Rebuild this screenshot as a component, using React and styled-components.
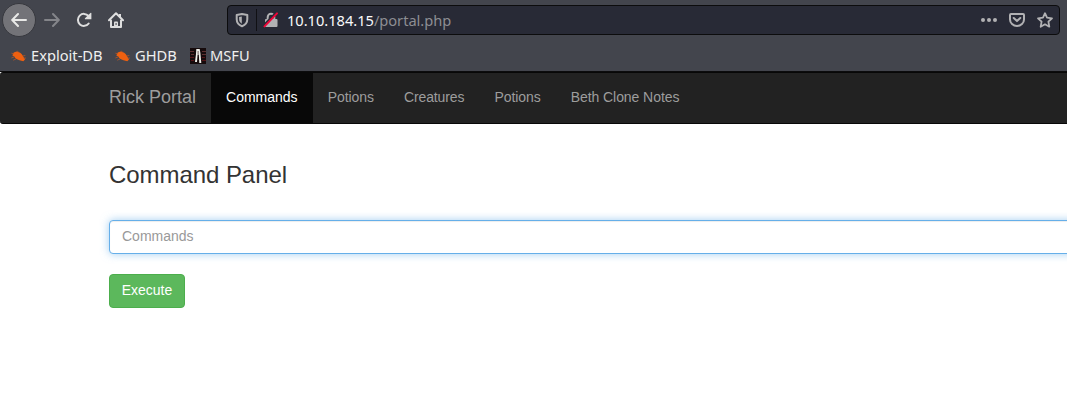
import React from "react";
import styled, { createGlobalStyle } from "styled-components";

const GlobalStyle = createGlobalStyle`
  *, *::before, *::after { box-sizing: border-box; }
  html, body { margin: 0; background: #fff; overflow: hidden; }
  button, input { font: inherit; }
`;

const Page = styled.div`
  width: 100%;
  height: 416px;
  overflow: hidden;
  background: #fff;
  color: #333;
  font: 14px/20px "Liberation Sans", Arial, sans-serif;
`;

const BrowserChrome = styled.header`
  height: 72px;
  background: #43454d;
  border-bottom: 1px solid #0c0c0d;
  font-family: "Noto Sans", sans-serif;
`;

const Toolbar = styled.div`
  display: flex;
  align-items: center;
  height: 40px;
  padding: 0 7px 0 2px;
`;

const NavButton = styled.span`
  display: flex;
  align-items: center;
  justify-content: center;
  width: 32px;
  height: 32px;
  color: ${(p) => (p.$dim ? "#84858a" : "#dedede")};
`;

const BackButton = styled.span`
  display: flex;
  align-items: center;
  justify-content: center;
  width: 34px;
  height: 34px;
  border: 1px solid #37383e;
  border-radius: 50%;
  background: #737378;
  color: #e9e9e7;
`;

const UrlBar = styled.div`
  display: flex;
  align-items: center;
  flex: 1;
  height: 30px;
  margin-left: 95px;
  padding: 0 6px;
  border: 1px solid #0c0c0d;
  border-radius: 4px;
  background: #282a36;
  color: #b1b1b3;
`;

const UrlDivider = styled.span`
  width: 1px;
  height: 22px;
  margin: 0 6px 0 6px;
  background: #101014;
`;

const Url = styled.span`
  flex: 1;
  margin-left: 8px;
  font-size: 14.67px;
  line-height: 20px;
  letter-spacing: -0.03px;
  color: #8d8e93;
`;

const Host = styled.span`
  color: #f9f9fa;
`;

const UrlActions = styled.span`
  display: flex;
  align-items: center;
  gap: 12px;
`;

const Bookmarks = styled.div`
  display: flex;
  align-items: center;
  height: 31px;
  padding-left: 11px;
`;

const Bookmark = styled.span`
  display: flex;
  align-items: center;
  gap: 4px;
  width: ${(p) => p.$width}px;
  font-size: 14.67px;
  line-height: 20px;
  color: #f0f0f0;
  white-space: nowrap;
`;

const BookmarkLabel = styled.span`
  padding-bottom: 2px;
`;

const Icon = styled.svg`
  display: block;
  flex: none;
`;

const Navbar = styled.nav`
  display: flex;
  height: 52px;
  padding-left: 94px;
  border: solid #080808;
  border-width: 1px 0;
  border-radius: 3px 0 0 3px;
  background: #222;
`;

const Brand = styled.span`
  padding: 14px 15px;
  font-size: 18px;
  line-height: 20px;
  color: #9d9d9d;
`;

const NavItem = styled.span`
  padding: 14px 15px 16px;
  letter-spacing: ${(p) => p.$tracking}px;
  white-space: nowrap;
  color: ${(p) => (p.$active ? "#fff" : "#9d9d9d")};
  background: ${(p) => (p.$active ? "#080808" : "transparent")};
`;

const Panel = styled.main`
  padding: 37px 0 0 109px;
`;

const Title = styled.h3`
  margin: 0 0 32px;
  font-size: 24px;
  font-weight: 400;
  line-height: 27px;
  letter-spacing: -0.06px;
`;

const CommandInput = styled.input`
  display: block;
  width: 1140px;
  height: 34px;
  padding: 5px 12px 7px;
  border: 1px solid #66afe9;
  border-radius: 4px;
  outline: 0;
  background: #fff;
  color: #555;
  box-shadow: inset 0 1px 1px rgba(0, 0, 0, 0.075), 0 0 8px rgba(102, 175, 233, 0.6);

  &::placeholder {
    color: #999;
    opacity: 1;
  }
`;

const ExecuteButton = styled.button`
  display: block;
  width: 76px;
  height: 34px;
  margin-top: 20px;
  padding: 5px 0 7px;
  border: 1px solid #4cae4c;
  border-radius: 4px;
  background: #5cb85c;
  color: #fff;
  line-height: 20px;
`;

const stroke = {
  fill: "none",
  stroke: "currentColor",
  strokeWidth: 2,
  strokeLinecap: "round",
  strokeLinejoin: "round",
};

const BackIcon = () => (
  <Icon width="16" height="16" viewBox="0 0 16 16">
    <path {...stroke} d="M15 8H1.5M7 2 1.2 8 7 14" />
  </Icon>
);

const ForwardIcon = () => (
  <Icon width="16" height="16" viewBox="0 0 16 16">
    <path {...stroke} d="M1 8h13.5M9 2l5.8 6L9 14" />
  </Icon>
);

const ReloadIcon = () => (
  <Icon width="16" height="16" viewBox="0 0 16 16">
    <path {...stroke} d="M12.7 11.5A6 6 0 1 1 12.5 4" />
    <path fill="currentColor" d="M15.4 1v6.2H9Q8.6 6.6 9 6.2L14.4 1Q15 .6 15.4 1Z" />
  </Icon>
);

const HomeIcon = () => (
  <Icon width="16" height="16" viewBox="0 0 16 16">
    <path {...stroke} d="M1 8.2 8 1.2l7 7M3 8.5V15h10V8.5" />
    <path fill="currentColor" d="M6 15v-4.6q0-.9.9-.9h2.2q.9 0 .9.9V15Z" />
    <path fill="#43454d" d="M7.4 11.2h1.4v1.6H7.4Z" />
    <path fill="currentColor" d="M11 2h2v4l-2-2Z" />
  </Icon>
);

const ShieldIcon = () => (
  <Icon width="16" height="16" viewBox="0 0 16 16">
    <path {...stroke} d="M8 2 13.3 3v4.2c0 3.4-2 5.7-5.3 7-3.3-1.3-5.3-3.6-5.3-7V3Z" />
    <path fill="currentColor" d="M7.8 4.5v7.2C6 10.6 5.1 9.1 5.1 7V5Z" />
  </Icon>
);

const InsecureIcon = () => (
  <Icon width="16" height="16" viewBox="0 0 16 16">
    <path {...stroke} d="M4.7 8V5a3.3 3.3 0 0 1 6.6 0v3" />
    <rect x="2" y="7" width="12.5" height="8" rx="1" fill="currentColor" />
    <path d="M.3 13.7 12.9.7" stroke="#282a36" strokeWidth="2" />
    <path d="M1.5 14.4 14 1.4" stroke="#f00438" strokeWidth="2" strokeLinecap="round" />
  </Icon>
);

const MoreIcon = () => (
  <Icon width="16" height="16" viewBox="0 0 16 16" fill="currentColor">
    <circle cx="2" cy="8" r="2" />
    <circle cx="8" cy="8" r="2" />
    <circle cx="14" cy="8" r="2" />
  </Icon>
);

const PocketIcon = () => (
  <Icon width="16" height="16" viewBox="0 0 16 16">
    <path {...stroke} d="M2 2h12q1 0 1 1v4.5a7 6.5 0 0 1-14 0V3q0-1 1-1Z" />
    <path {...stroke} d="M4.7 6 8 9.1 11.3 6" />
  </Icon>
);

const StarIcon = () => (
  <Icon width="16" height="16" viewBox="0 0 16 16">
    <path {...stroke} strokeWidth="1.8" d="m8 1.2 2 4.5 5 .6-3.6 3.4.9 5L8 12.3l-4.3 2.4.9-5L1 6.3l5-.6Z" />
  </Icon>
);

const BugIcon = () => (
  <Icon width="16" height="16" viewBox="0 0 16 16">
    <path
      fill="#ef6010"
      d="M2.8 4.6 5.5 3.6Q9.7 4 11.8 7.7L14 11.4 12.3 13.2 8.5 12.2Q4.3 11.3 3.3 8.6L1.3 7.6Z"
    />
    <path
      fill="none"
      stroke="#c8581c"
      strokeWidth="0.7"
      d="M3 6 .4 5.2M3 9 .4 10M5 11 2.2 12.2M7.5 4.8 6.5 2.8M11.5 8l2.8-.5M12.4 10.2l2.6-.2"
    />
  </Icon>
);

const MsfuIcon = () => (
  <Icon width="16" height="16" viewBox="0 0 16 16">
    <rect width="16" height="16" fill="#160b0c" />
    <path stroke="#5c3030" strokeWidth="1" d="M0 3.5h4M1 6.5h3M12 3.5h4M12 6.5h4" />
    <path stroke="#551417" strokeWidth="1" d="M0 9.5h4M1 12.5h3M12 9.5h3M12 12.5h4" />
    <path fill="#efefe9" d="M6.3 1h3.4l.7 4 .9 10H9.3L8.8 6.5H7.6L7 14H5l1-8Z" />
    <path fill="#6b5a58" d="M7.6 3h1v3h-1Z" />
  </Icon>
);

const bookmarks = [
  { label: "Exploit-DB", width: 104, icon: <BugIcon /> },
  { label: "GHDB", width: 75, icon: <BugIcon /> },
  { label: "MSFU", width: 61, icon: <MsfuIcon /> },
];

const links = [
  { label: "Commands", tracking: 0 },
  { label: "Potions", tracking: -0.05 },
  { label: "Creatures", tracking: -0.12 },
  { label: "Potions", tracking: -0.05 },
  { label: "Beth Clone Notes", tracking: -0.07 },
];

export default function App() {
  return (
    <Page>
      <GlobalStyle />
      <BrowserChrome>
        <Toolbar>
          <BackButton><BackIcon /></BackButton>
          <NavButton $dim><ForwardIcon /></NavButton>
          <NavButton><ReloadIcon /></NavButton>
          <NavButton><HomeIcon /></NavButton>
          <UrlBar>
            <ShieldIcon />
            <UrlDivider />
            <InsecureIcon />
            <Url><Host>10.10.184.15</Host>/portal.php</Url>
            <UrlActions>
              <MoreIcon />
              <PocketIcon />
              <StarIcon />
            </UrlActions>
          </UrlBar>
        </Toolbar>
        <Bookmarks>
          {bookmarks.map((b) => (
            <Bookmark key={b.label} $width={b.width}>
              {b.icon}
              <BookmarkLabel>{b.label}</BookmarkLabel>
            </Bookmark>
          ))}
        </Bookmarks>
      </BrowserChrome>
      <Navbar>
        <Brand>Rick Portal</Brand>
        {links.map((link, i) => (
          <NavItem key={i} $active={i === 0} $tracking={link.tracking}>{link.label}</NavItem>
        ))}
      </Navbar>
      <Panel>
        <Title>Command Panel</Title>
        <CommandInput type="text" placeholder="Commands" />
        <ExecuteButton type="button">Execute</ExecuteButton>
      </Panel>
    </Page>
  );
}
